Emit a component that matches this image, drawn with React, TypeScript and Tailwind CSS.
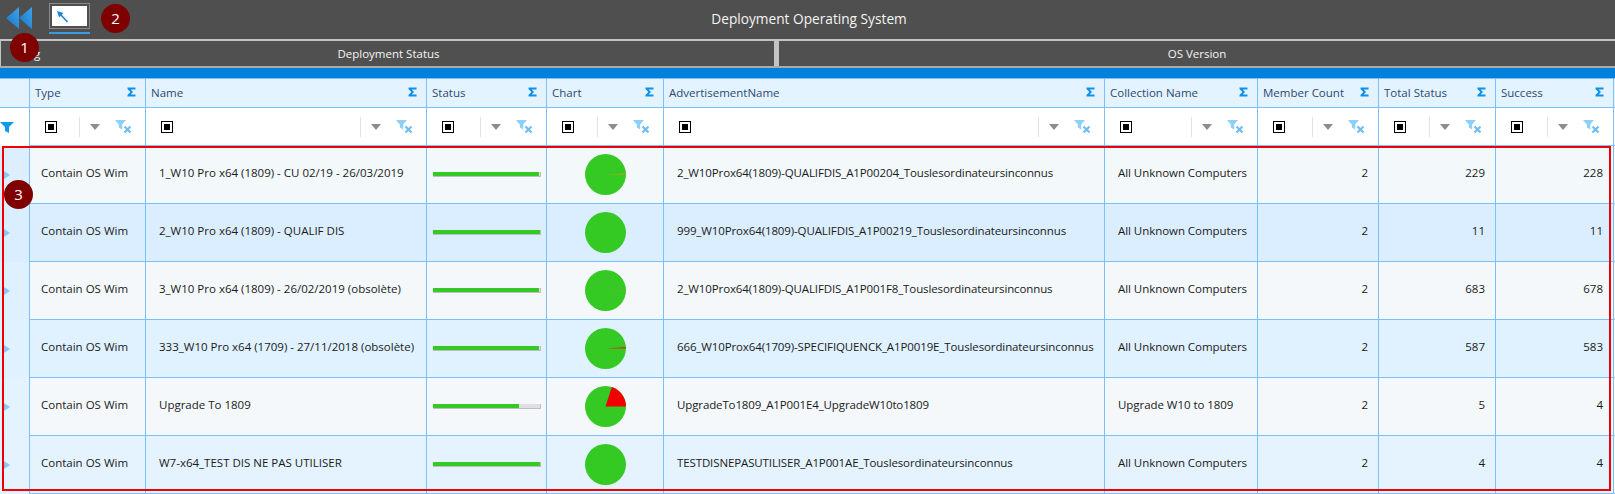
const font = "font-['Open_Sans','Noto_Sans',sans-serif]";

const columns = [
  { name: "Type", width: "w-[116px]" },
  { name: "Name", width: "w-[281px]" },
  { name: "Status", width: "w-[120px]" },
  { name: "Chart", width: "w-[117px]" },
  { name: "AdvertisementName", width: "w-[441px]" },
  { name: "Collection Name", width: "w-[153px]" },
  { name: "Member Count", width: "w-[121px]" },
  { name: "Total Status", width: "w-[117px]" },
  { name: "Success", width: "w-[118px]" },
];

const rows = [
  { name: "1_W10 Pro x64 (1809) - CU 02/19 - 26/03/2019", adv: "2_W10Prox64(1809)-QUALIFDIS_A1P00204_Touslesordinateursinconnus", col: "All Unknown Computers", total: 229, success: 228, bar: 99, slice: 3, sliceColor: "#c9a01c", bg: "bg-[#f3f8fa]", gutter: "bg-[#dceeff]" },
  { name: "2_W10 Pro x64 (1809) - QUALIF DIS", adv: "999_W10Prox64(1809)-QUALIFDIS_A1P00219_Touslesordinateursinconnus", col: "All Unknown Computers", total: 11, success: 11, bar: 100, slice: 0, sliceColor: "#f00000", bg: "bg-[#dbeeff]", gutter: "bg-[#dbeeff]" },
  { name: "3_W10 Pro x64 (1809) - 26/02/2019 (obsolète)", adv: "2_W10Prox64(1809)-QUALIFDIS_A1P001F8_Touslesordinateursinconnus", col: "All Unknown Computers", total: 683, success: 678, bar: 99, slice: 2, sliceColor: "#7fae20", bg: "bg-[#f4f8fa]", gutter: "bg-[#dff0ff]" },
  { name: "333_W10 Pro x64 (1709) - 27/11/2018 (obsolète)", adv: "666_W10Prox64(1709)-SPECIFIQUENCK_A1P0019E_Touslesordinateursinconnus", col: "All Unknown Computers", total: 587, success: 583, bar: 99, slice: 4, sliceColor: "#e02a1a", bg: "bg-[#e0f1ff]", gutter: "bg-[#e0f1ff]" },
  { name: "Upgrade To 1809", adv: "UpgradeTo1809_A1P001E4_UpgradeW10to1809", col: "Upgrade W10 to 1809", total: 5, success: 4, bar: 80, slice: 72, sliceColor: "#f00000", bg: "bg-[#f4f8fa]", gutter: "bg-[#e3f3ff]" },
  { name: "W7-x64_TEST DIS NE PAS UTILISER", adv: "TESTDISNEPASUTILISER_A1P001AE_Touslesordinateursinconnus", col: "All Unknown Computers", total: 4, success: 4, bar: 100, slice: 0, sliceColor: "#f00000", bg: "bg-[#e4f3ff]", gutter: "bg-[#e4f3ff]" },
];

function Sigma() {
  return (
    <svg width="9" height="10" viewBox="0 0 9 10" className="shrink-0 -mt-[2px]">
      <path d="M0.5 0.5H8.5V2.5H3.6L6 5L3.6 7.5H8.5V9.5H0.5V8L3.4 5L0.5 2V0.5Z" fill="#0f8fe8" />
    </svg>
  );
}

function FilterBox() {
  return (
    <div className="w-3 h-3 border-[1.5px] border-black flex items-center justify-center bg-white shrink-0">
      <div className="w-[6px] h-[6px] bg-black" />
    </div>
  );
}

function ClearFilter() {
  return (
    <svg width="17" height="13" viewBox="0 0 17 13" className="shrink-0">
      <path d="M0 0H11L7.2 4.5V9.5L3.8 7.5V4.5L0 0Z" fill="#8fd0fb" />
      <path d="M9.5 6.5L15.5 12.5M15.5 6.5L9.5 12.5" stroke="#6fbdf5" strokeWidth="2.2" />
    </svg>
  );
}

function Pie({ slice, color }: { slice: number; color: string }) {
  // slice is the angle of the failed part, drawn upward from 3 o'clock
  const a = (slice * Math.PI) / 180;
  const x = 20.5 + 20.5 * Math.cos(a);
  const y = 20.5 - 20.5 * Math.sin(a);
  return (
    <svg width="41" height="41" viewBox="0 0 41 41">
      <circle cx="20.5" cy="20.5" r="20.5" fill="#35c924" />
      {slice > 0 && <path d={`M20.5 20.5L41 20.5A20.5 20.5 0 0 0 ${x} ${y}Z`} fill={color} />}
    </svg>
  );
}

const badge = "absolute w-[29px] h-[29px] rounded-full bg-[#7f0000] text-white text-[15px] flex items-center justify-center";
const cell = "border-l border-b border-[#7ac1fb] flex items-center";

export default function App() {
  return (
    <div className={`relative w-[1615px] h-[494px] overflow-hidden bg-white text-[12px] ${font}`}>
      {/* barre du haut */}
      <div className="relative h-[39px] bg-[#4f4f4f] flex items-center justify-center pl-[3px] text-[#f4f4f4] text-[13.7px]">
        <div className="absolute left-[6px] top-[7px]">
          <svg width="26" height="22" viewBox="0 0 26 22" className="block">
            <defs>
              <linearGradient id="back" x1="0" y1="1" x2="1" y2="0">
                <stop offset="0" stopColor="#1a72c2" />
                <stop offset="1" stopColor="#3da4ec" />
              </linearGradient>
            </defs>
            <path d="M13 0V22L0 11Z" fill="url(#back)" />
            <path d="M26 0V22L13 11Z" fill="url(#back)" />
          </svg>
        </div>
        <div className="absolute left-[49px] top-[3px] w-[41px] flex flex-col">
          <div className="h-[26px] border border-[#8a8a8a] p-[2px]">
            <div className="h-full bg-white flex items-start pl-[5px] pt-[5px]">
              <svg width="12" height="12" viewBox="0 0 12 12" className="block">
                <path d="M0 0L6.5 2L2 6.5Z" fill="#1b86d6" />
                <path d="M3 3L10.5 11" stroke="#1b86d6" strokeWidth="1.6" />
              </svg>
            </div>
          </div>
          <div className="mt-[3px] h-[2px] bg-[#3c9ae0]" />
        </div>
        Deployment Operating System
      </div>

      {/* onglets */}
      <div className="h-[29px] flex bg-[#505050] border-y-2 border-[#c4c4c4] text-[#f4f4f4] text-[11.5px] border-b-[#aaaaaa]">
        <div className="relative w-[774px] h-full border-l border-[#c4c4c4] flex items-center justify-center pl-[2px]">
          <span className="absolute left-[20px]">Log</span>
          Deployment Status
        </div>
        <div className="w-[5px] h-full bg-[#c4c4c4]" />
        <div className="flex-1 h-full flex items-center justify-center">OS Version</div>
      </div>

      <div className="h-[10px] bg-[#0280dd]" />

      {/* en-tetes */}
      <div className="h-[30px] flex bg-[#e3f3ff] border-t border-b border-[#7ac1fb] text-[#2d4a70] text-[11.5px]">
        <div className="w-[29px]" />
        {columns.map((c) => (
          <div key={c.name} className={`${c.width} h-full border-l border-[#7ac1fb] flex items-center justify-between pl-[5px] pr-[9px]`}>
            <span>{c.name}</span>
            <Sigma />
          </div>
        ))}
        <div className="flex-1 border-l border-[#7ac1fb]" />
      </div>

      {/* filtres */}
      <div className="h-[38px] flex bg-white">
        <div className="w-[29px] flex items-center">
          <svg width="14" height="11" viewBox="0 0 14 11" className="block">
            <path d="M0 0H14L9 5V11L5 9V5L0 0Z" fill="#0f9aee" />
          </svg>
        </div>
        {columns.map((c) => (
          <div key={c.name} className={`${c.width} h-full ${cell} pl-[15px] pr-[13px]`}>
            <FilterBox />
            <div className="ml-auto h-5 border-l border-[#e2e2e2] flex items-center pl-[10px] gap-[15px]">
              <div className="w-0 h-0 border-x-[5px] border-x-transparent border-t-[6px] border-t-[#8c8c8c]" />
              <ClearFilter />
            </div>
          </div>
        ))}
        <div className={`flex-1 ${cell}`} />
      </div>

      {/* lignes */}
      {rows.map((r) => (
        <div key={r.name} className={`h-[58px] flex ${r.bg} text-[#1a1a1a] text-[11.5px]`}>
          <div className={`w-[29px] ${r.gutter} flex items-center pl-1`}>
            <div className="w-0 h-0 border-y-[4px] border-y-transparent border-l-[6px] border-l-[#8cc4f5]" />
          </div>
          <div className={`w-[116px] ${cell} pl-[11px] pb-1`}>Contain OS Wim</div>
          <div className={`w-[281px] ${cell} pl-[13px] pb-1`}>{r.name}</div>
          <div className={`w-[120px] ${cell} pl-[6px]`}>
            <div className="w-[108px] h-[5px] bg-[#e0e0e0] border-b border-r border-[#bdbdbd]">
              <div className="h-full bg-[#35c924]" style={{ width: `${r.bar}%` }} />
            </div>
          </div>
          <div className={`w-[117px] ${cell} justify-center`}>
            <Pie slice={r.slice} color={r.sliceColor} />
          </div>
          <div className={`w-[441px] ${cell} pl-[13px] pb-1 tracking-[-0.12px]`}>{r.adv}</div>
          <div className={`w-[153px] ${cell} pl-[13px] pb-1 tracking-[-0.05px]`}>{r.col}</div>
          <div className={`w-[121px] ${cell} justify-end pr-[10px] pb-1`}>2</div>
          <div className={`w-[117px] ${cell} justify-end pr-[10px] pb-1`}>{r.total}</div>
          <div className={`w-[118px] ${cell} justify-end pr-[10px] pb-1`}>{r.success}</div>
          <div className={`flex-1 ${cell} bg-white`} />
        </div>
      ))}

      {/* annotations */}
      <div className="absolute left-[2px] top-[146px] w-[1609px] h-[345px] border-2 border-[#f00000]" />
      <div className={`${badge} left-[10px] top-[33px]`}>1</div>
      <div className={`${badge} left-[101px] top-[4px]`}>2</div>
      <div className={`${badge} left-[4px] top-[180px]`}>3</div>
    </div>
  );
}
